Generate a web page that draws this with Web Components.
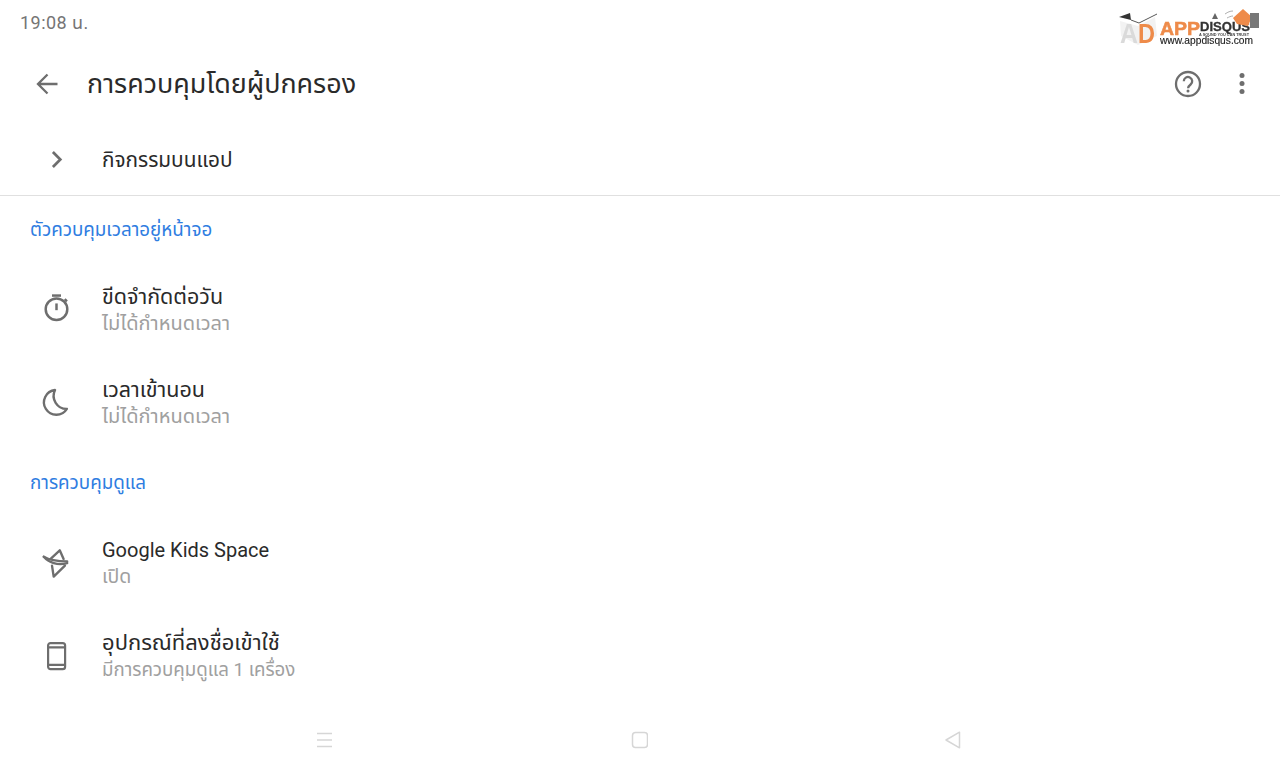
<!DOCTYPE html>
<html lang="th">
<head>
<meta charset="utf-8">
<title>การควบคุมโดยผู้ปกครอง</title>
<style>
  html, body { margin: 0; padding: 0; background: #fff; }
  body { width: 1280px; height: 764px; overflow: hidden; font-family: Roboto, "Noto Sans", "Noto Sans Thai", sans-serif; }
  app-screen { height: 764px; }
</style>
</head>
<body>
<app-screen>
  <status-bar time="19:08 น."></status-bar>
  <app-toolbar heading="การควบคุมโดยผู้ปกครอง"></app-toolbar>
  <setting-row single icon="chevron" title="กิจกรรมบนแอป" style="--title-size: 20.800px"></setting-row>
  <section-head>ตัวควบคุมเวลาอยู่หน้าจอ</section-head>
  <setting-row icon="timer" title="ขีดจำกัดต่อวัน" summary="ไม่ได้กำหนดเวลา" style="--summary-size: 20px; --summary-shift: 0px"></setting-row>
  <setting-row icon="moon" title="เวลาเข้านอน" summary="ไม่ได้กำหนดเวลา" style="--summary-size: 20px; --summary-shift: 0px"></setting-row>
  <section-head>การควบคุมดูแล</section-head>
  <setting-row icon="kids" title="Google Kids Space" summary="เปิด" style="--title-size: 20px"></setting-row>
  <setting-row icon="phone" title="อุปกรณ์ที่ลงชื่อเข้าใช้" summary="มีการควบคุมดูแล 1 เครื่อง" style="--title-size: 22px; --summary-size: 18.700px"></setting-row>
  <nav-bar></nav-bar>
</app-screen>

<script>
  'use strict';

  const ICONS = {
    chevron: '<path d="M8.800 5.400 15.400 12l-6.600 6.600" fill="none" stroke="#6e6e6e" stroke-width="2.400"/>',
    timer: '<g fill="none" stroke="#6e6e6e" stroke-width="2.200"><circle cx="12" cy="12.700" r="9.600"/><path d="M12 7.500v6"/><path d="M8 .5h8"/><path d="m19.300 3.700 2 1.900"/></g>',
    moon: '<path d="M12.500 1.800A11 11 0 1 0 23 18.500 11.500 11.500 0 0 1 12.500 1.800Z" fill="none" stroke="#6e6e6e" stroke-width="2.100" stroke-linejoin="round"/>',
    kids: '<g fill="none" stroke="#6e6e6e" stroke-width="2.100" stroke-linejoin="round" stroke-linecap="round"><path d="M7 8.600 14.900 1.200l3.400 7.700"/><path d="M8 14.800 9.500 24.500l10-9.800"/><path d="M.7 6.900C5 9.500 13 11 21.500 11"/><path d="M.7 6.900C5 12 13 15 21.500 12.500"/></g>',
    phone: '<g fill="none" stroke="#6e6e6e" stroke-width="2.200"><rect x="4.100" y="1.100" width="17" height="26" rx="2.400"/><path d="M4.100 5.400h17M4.100 22.800h17"/></g>'
  };

  // nudges for the two icons whose ink sits off the row centre
  const ICON_SHIFT = {moon: 'translate(-2px, -1px)', timer: 'translate(0, -1px)'};

  class AppScreen extends HTMLElement {
    constructor() {
      super();
      this.attachShadow({mode: 'open'});
      this.shadowRoot.innerHTML = `
      <style>
        :host { display: flex; flex-direction: column; width: 1280px; background: #fff; }
      </style>
      <slot></slot>`;
    }
  }

  class StatusBar extends HTMLElement {
    constructor() {
      super();
      this.attachShadow({mode: 'open'});
      this.shadowRoot.innerHTML = `
      <style>
        :host { display: flex; justify-content: space-between; height: 44px; padding: 0 22px 0 20px; position: relative; }
        .time { font-size: 18px; line-height: 46px; color: #757575; letter-spacing: .45px; font-weight: 400; }
        .logo { position: absolute; left: 1118px; top: 6px; width: 144px; height: 42px; filter: blur(.35px); }
        text { font-family: "Liberation Sans", sans-serif; }
      </style>
      <span class="time">${this.getAttribute('time')}</span>
      <svg class="logo" viewBox="0 0 144 42">
        <path d="M2 15 20 20 37 11 39 30 20 39 3 30Z" fill="#f2f2f2"/>
        <path d="M1 11 12 7 13 14Z" fill="#333"/>
        <path d="M13 14 21 17 39 8" fill="none" stroke="#444" stroke-width=".9"/>
        <text x="2" y="37" font-size="27" font-weight="700" fill="#dadada" textLength="18" lengthAdjust="spacingAndGlyphs">A</text>
        <text x="20" y="37" font-size="27" font-weight="700" fill="#ee8b4a" textLength="17" lengthAdjust="spacingAndGlyphs">D</text>
        <text x="42" y="29" font-size="18" font-weight="700" fill="#ee8b4a" stroke="#ee8b4a" stroke-width=".5" textLength="40" lengthAdjust="spacingAndGlyphs">APP</text>
        <text x="82" y="25" font-size="12" font-weight="700" fill="#333" stroke="#333" stroke-width=".3" textLength="50" lengthAdjust="spacingAndGlyphs">DISQUS</text>
        <text x="81" y="29.500" font-size="3.800" font-weight="700" fill="#444" textLength="50" lengthAdjust="spacingAndGlyphs">A SOUND YOU CAN TRUST</text>
        <text x="42" y="38" font-size="11" fill="#222" stroke="#222" stroke-width=".15" textLength="93" lengthAdjust="spacingAndGlyphs">www.appdisqus.com</text>
        <path d="M115 12 125 3 134 11 130 20 119 18Z" fill="#ee8b4a"/>
        <path d="M97 7 100 13H94Z" fill="#666"/>
        <path d="M107 8c3-2 5-3 8-3M109 12c2-1 4-2 6-2" fill="none" stroke="#999" stroke-width=".8"/>
        <rect x="132" y="7" width="9" height="15" fill="#777"/>
      </svg>`;
    }
  }

  class AppToolbar extends HTMLElement {
    constructor() {
      super();
      this.attachShadow({mode: 'open'});
      this.shadowRoot.innerHTML = `
      <style>
        :host { display: flex; align-items: center; height: 80px; color: #2a2a2a; }
        .back { width: 24px; height: 24px; margin: 0 28px 0 35px; }
        h1 { flex: 1; margin: 0; font-size: 26.900px; font-weight: 400; }
        .help { width: 28px; height: 28px; margin-right: 28px; }
        .more { width: 24px; height: 24px; margin-right: 26px; }
      </style>
      <svg class="back" viewBox="0 0 24 24"><path d="M22.500 12H3.500M12.500 2.500 3 12l9.500 9.500" fill="none" stroke="#6e6e6e" stroke-width="2.300"/></svg>
      <h1>${this.getAttribute('heading')}</h1>
      <svg class="help" viewBox="0 0 28 28"><circle cx="14" cy="14" r="12" fill="none" stroke="#6e6e6e" stroke-width="2.300"/><path d="M9.800 11.200a4.200 4.200 0 1 1 6.800 3.300c-1.500 1.200-2.500 2-2.500 3.700" fill="none" stroke="#6e6e6e" stroke-width="2.300"/><circle cx="14" cy="21" r="1.500" fill="#6e6e6e"/></svg>
      <svg class="more" viewBox="0 0 24 24"><g fill="#6e6e6e"><circle cx="12" cy="3.500" r="2.500"/><circle cx="12" cy="11.500" r="2.500"/><circle cx="12" cy="19.500" r="2.500"/></g></svg>`;
    }
  }

  class SettingRow extends HTMLElement {
    constructor() {
      super();
      this.attachShadow({mode: 'open'});
      const summary = this.getAttribute('summary');
      const icon = this.getAttribute('icon');
      const box = icon === 'phone' ? '0 0 25 28' : '0 0 24 24';
      const w = icon === 'phone' ? 25 : 27;
      const h = icon === 'phone' ? 28 : 27;
      this.shadowRoot.innerHTML = `
      <style>
        :host { display: flex; align-items: center; height: 93px; }
        :host([single]) { height: 71px; border-bottom: 1px solid #e0e0e0; }
        .icon { flex: none; display: flex; justify-content: center; width: 27px; margin: 0 32px 0 43px; }
        svg { width: ${w}px; height: ${h}px; flex: none; overflow: visible; transform: ${ICON_SHIFT[icon] || 'none'}; }
        .title { font-size: var(--title-size, 21.500px); line-height: 26px; color: #2a2a2a; }
        .summary { font-size: var(--summary-size, 19.500px); line-height: 26px; height: 26px; transform: translateY(var(--summary-shift, 1px)); color: #a0a0a0; }
      </style>
      <div class="icon"><svg viewBox="${box}">${ICONS[icon]}</svg></div>
      <div>
        <div class="title">${this.getAttribute('title')}</div>
        ${summary ? `<div class="summary">${summary}</div>` : ''}
      </div>`;
    }
  }

  class SectionHead extends HTMLElement {
    constructor() {
      super();
      this.attachShadow({mode: 'open'});
      this.shadowRoot.innerHTML = `
      <style>
        :host { display: flex; align-items: center; height: 67px; padding-left: 30px; font-size: 18.800px; color: #2f7de1; }
      </style>
      <slot></slot>`;
    }
  }

  class NavBar extends HTMLElement {
    constructor() {
      super();
      this.attachShadow({mode: 'open'});
      this.shadowRoot.innerHTML = `
      <style>
        :host { display: flex; justify-content: space-between; align-items: center; height: 20px; margin-top: 28px; padding: 0 318px 0 316px; }
        svg { width: 18px; height: 18px; }
      </style>
      <svg viewBox="0 0 18 18"><path d="M1 2.500h15M1 9h15M1 15.500h15" stroke="#d6d6d6" stroke-width="1.500"/></svg>
      <svg viewBox="0 0 18 18"><rect x="2.500" y="1.500" width="15" height="15" rx="3" fill="none" stroke="#d6d6d6" stroke-width="1.500"/></svg>
      <svg viewBox="0 0 18 18"><path d="M15.500 1.200v15.600L2 9Z" fill="none" stroke="#d6d6d6" stroke-width="1.500" stroke-linejoin="round"/></svg>`;
    }
  }

  customElements.define('app-screen', AppScreen);
  customElements.define('status-bar', StatusBar);
  customElements.define('app-toolbar', AppToolbar);
  customElements.define('setting-row', SettingRow);
  customElements.define('section-head', SectionHead);
  customElements.define('nav-bar', NavBar);
</script>
</body>
</html>
